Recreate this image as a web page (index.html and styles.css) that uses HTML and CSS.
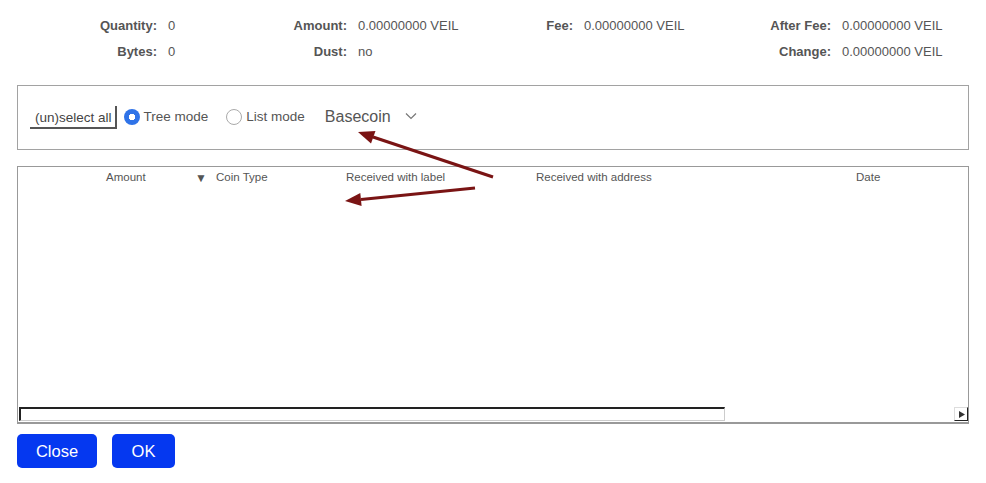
FILE: index.html
```html
<!DOCTYPE html>
<html>
<head>
<meta charset="utf-8">
<link rel="stylesheet" href="styles.css">
</head>
<body>
<div class="page">
  <div class="stats">
    <div class="lbl">Quantity:</div><div class="val">0</div>
    <div class="lbl">Amount:</div><div class="val">0.00000000 VEIL</div>
    <div class="lbl">Fee:</div><div class="val">0.00000000 VEIL</div>
    <div class="lbl">After Fee:</div><div class="val">0.00000000 VEIL</div>
    <div class="lbl">Bytes:</div><div class="val">0</div>
    <div class="lbl">Dust:</div><div class="val">no</div>
    <div class="lbl"></div><div class="val"></div>
    <div class="lbl">Change:</div><div class="val">0.00000000 VEIL</div>
  </div>

  <div class="group">
    <button class="selall">(un)select all</button>
    <label class="radio"><span class="dot on"></span>Tree mode</label>
    <label class="radio"><span class="dot"></span>List mode</label>
    <div class="combo">Basecoin
      <svg class="chev" width="12" height="8" viewBox="0 0 12 8"><path d="M1 1.5 L6 6.5 L11 1.5" fill="none" stroke="#777" stroke-width="1.2"/></svg>
    </div>
  </div>

  <div class="table">
    <div class="thead">
      <div class="th c-amount">Amount</div>
      <div class="th c-sort">▼</div>
      <div class="th c-type">Coin Type</div>
      <div class="th c-label">Received with label</div>
      <div class="th c-addr">Received with address</div>
      <div class="th c-date">Date</div>
    </div>
    <div class="tbody"></div>
    <div class="hscroll">
      <div class="track"></div>
      <div class="arrowbtn"><svg width="9" height="9" viewBox="0 0 9 9"><path d="M2 1 L8 4.5 L2 8 Z" fill="#333"/></svg></div>
    </div>
  </div>

  <div class="actions">
    <button class="btn btn-close">Close</button>
    <button class="btn btn-ok">OK</button>
  </div>

  <svg class="annot" width="986" height="483" viewBox="0 0 986 483">
    <line x1="493" y1="177" x2="373" y2="137" stroke="#7a1414" stroke-width="3"/>
    <polygon points="358,132 375.5,131 371,143.5" fill="#7a1414"/>
    <line x1="475" y1="188" x2="361" y2="199.5" stroke="#7a1414" stroke-width="3"/>
    <polygon points="345,201 360.3,193 361.6,206" fill="#7a1414"/>
  </svg>
</div>
</body>
</html>
```

FILE: styles.css
```css
html, body {
  margin: 0;
  padding: 0;
  background: #fff;
}
body {
  font-family: "Liberation Sans", Arial, sans-serif;
  color: #555;
}
.page {
  position: relative;
  width: 986px;
  height: 483px;
  overflow: hidden;
}
.stats {
  display: grid;
  grid-template-columns: 157px 103px 87px 153px 73px 147px 111px 1fr;
  grid-auto-rows: 26px;
  padding-top: 13px;
  font-size: 13px;
  line-height: 26px;
}
.lbl {
  text-align: right;
  font-weight: bold;
  color: #555;
}
.val {
  padding-left: 11px;
  color: #555;
}
.group {
  margin: 20px 0 0 17px;
  width: 938px;
  height: 63px;
  border: 1px solid #a2a2a2;
  display: flex;
  align-items: center;
  padding-left: 12px;
}
.selall {
  font-family: "Liberation Sans", Arial, sans-serif;
  font-size: 13.5px;
  color: #444;
  background: #fff;
  border: none;
  border-right: 2px solid #555;
  border-bottom: 2px solid #555;
  padding: 0 3px 0 5px;
  height: 23px;
  margin-bottom: 1px;
  line-height: 23px;
}
.radio {
  display: flex;
  align-items: center;
  font-size: 13.5px;
  color: #555;
  margin-left: 7px;
  margin-bottom: 2px;
}
.radio + .radio {
  margin-left: 18px;
}
.dot {
  width: 16px;
  height: 16px;
  border-radius: 50%;
  border: 1px solid #aaa;
  box-sizing: border-box;
  margin-right: 4px;
  background: #fff;
}
.dot.on {
  border: none;
  background: radial-gradient(circle, #fff 0 3px, #2f73e8 3.5px);
}
.combo {
  display: flex;
  align-items: center;
  margin-left: 20px;
  margin-bottom: 2px;
  font-size: 16px;
  color: #555;
}
.chev {
  margin-left: 14px;
  margin-bottom: 2px;
}
.table {
  margin: 16px 0 0 17px;
  width: 950px;
  height: 255px;
  border: 1px solid #999;
  border-bottom-width: 2px;
  display: flex;
  flex-direction: column;
}
.thead {
  position: relative;
  height: 22px;
  font-size: 11.5px;
  color: #555;
}
.th {
  position: absolute;
  top: 4px;
}
.c-amount { left: 88px; }
.c-sort { left: 177px; font-size: 12px; top: 4px; }
.c-type { left: 198px; }
.c-label { left: 328px; }
.c-addr { left: 518px; }
.c-date { left: 838px; }
.tbody {
  flex: 1;
}
.hscroll {
  display: flex;
  align-items: flex-end;
  justify-content: space-between;
  height: 14px;
  margin: 0 0 1px 1px;
}
.track {
  width: 703px;
  height: 11px;
  border-top: 2px solid #222;
  border-left: 2px solid #222;
  border-right: 1px solid #ccc;
  border-bottom: 1px solid #ccc;
}
.arrowbtn {
  width: 12px;
  height: 12px;
  border-top: 1px solid #ddd;
  border-left: 1px solid #ddd;
  border-right: 1px solid #222;
  border-bottom: 1px solid #222;
  display: flex;
  align-items: center;
  justify-content: center;
}
.actions {
  display: flex;
  gap: 15px;
  margin: 10px 0 0 17px;
}
.btn {
  font-family: "Liberation Sans", Arial, sans-serif;
  font-size: 16.5px;
  color: #fff;
  background: #0538f0;
  border: none;
  border-radius: 5px;
  height: 34px;
  padding: 0;
}
.btn-close { width: 80px; }
.btn-ok { width: 63px; }
.annot {
  position: absolute;
  left: 0;
  top: 0;
  pointer-events: none;
}
```
